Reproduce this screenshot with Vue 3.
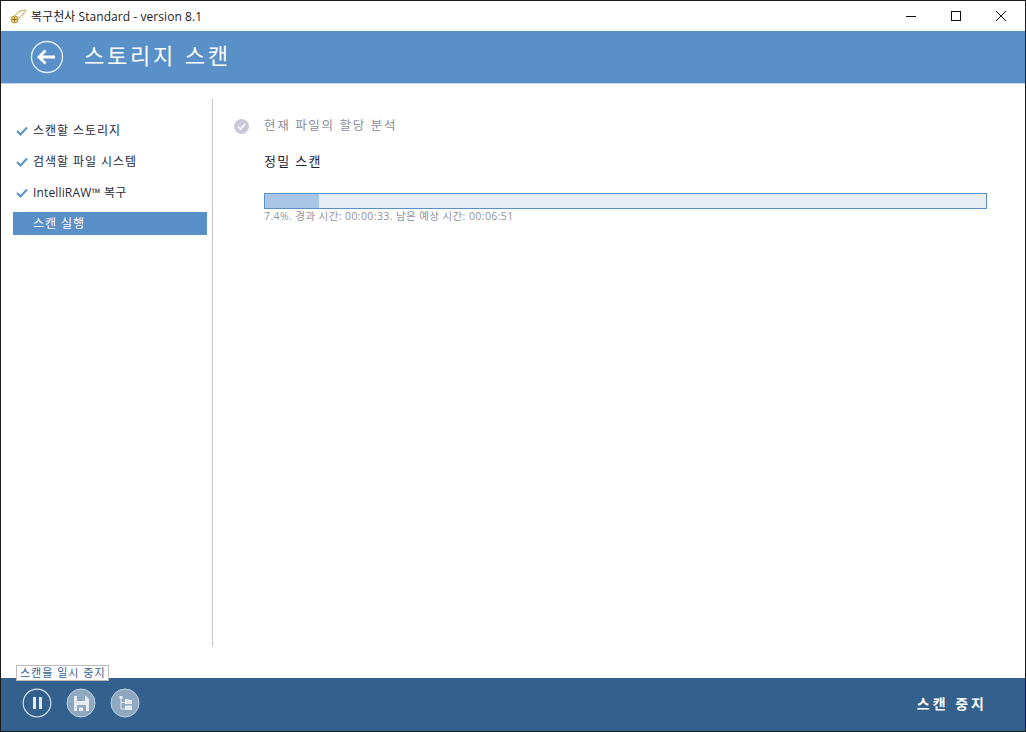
<template>
  <div class="window">
    <div class="titlebar">
      <svg class="logo" width="17" height="15" viewBox="0 0 17 15">
        <path d="M4 8C6 4 11 1 16 1C16 3 14 4 13 4.500C14 5 13 6 11.500 6.500C11 8 9 9 7 9" fill="#fffdf4" stroke="#c9a24d" stroke-width="1"/>
        <circle cx="4.500" cy="10.500" r="3.500" fill="#f6e08c" stroke="#b08a2c"/>
        <path d="M4.500 8V13M2 10.500H7" stroke="#8a6a18" stroke-width="1"/>
      </svg>
      <span class="app-title">복구천사 Standard - version 8.1</span>
      <div class="win-btns">
        <svg width="12" height="12" viewBox="0 0 12 12"><path d="M1 6.500H11" stroke="#111"/></svg>
        <svg width="12" height="12" viewBox="0 0 12 12"><rect x="1.500" y="1.500" width="9" height="9" fill="none" stroke="#111"/></svg>
        <svg width="12" height="12" viewBox="0 0 12 12"><path d="M1 1L11 11M11 1L1 11" stroke="#111"/></svg>
      </div>
    </div>

    <header class="header">
      <svg class="back" width="34" height="34" viewBox="0 0 34 34">
        <circle cx="17" cy="17" r="15.500" fill="none" stroke="#e8f0f8" stroke-width="1.300"/>
        <path d="M9 17H25M15.500 10.500L9 17L15.500 23.500" fill="none" stroke="#fff" stroke-width="2.800"/>
      </svg>
      <h1>스토리지 스캔</h1>
    </header>

    <main class="body">
      <nav class="steps">
        <div v-for="s in steps" :key="s.label" class="step" :class="{ active: s.active, latin: s.latin }">
          <svg v-if="!s.active" class="check" width="12" height="10" viewBox="0 0 12 10">
            <path d="M1 5L4.500 8.500L11 1.500" fill="none" stroke="#5a90c8" stroke-width="2"/>
          </svg>
          <span>{{ s.label }}</span>
        </div>
      </nav>

      <section class="content">
        <div class="stage-done">
          <svg width="15" height="15" viewBox="0 0 15 15">
            <circle cx="7.500" cy="7.500" r="7.500" fill="#c8c8d6"/>
            <path d="M4 7.500L6.500 10L11 5" fill="none" stroke="#fff" stroke-width="1.600"/>
          </svg>
          <span>현재 파일의 할당 분석</span>
        </div>
        <div class="stage-now">정밀 스캔</div>
        <div class="bar">
          <div class="bar-fill" :style="{ width: barWidth + '%' }"></div>
        </div>
        <div class="bar-text">7.4%. 경과 시간: 00:00:33. 남은 예상 시간: 00:06:51</div>
      </section>
    </main>

    <footer class="footer">
      <div class="tooltip">스캔을 일시 중지</div>
      <div class="tools">
        <button class="round">
          <svg width="30" height="30" viewBox="0 0 30 30">
            <circle cx="15" cy="15" r="13.800" fill="none" stroke="#d5dfe9" stroke-width="1.200"/>
            <rect x="11" y="9" width="3" height="12" fill="#e3eaf1"/>
            <rect x="17" y="9" width="3" height="12" fill="#e3eaf1"/>
          </svg>
        </button>
        <button class="round">
          <svg width="30" height="30" viewBox="0 0 30 30">
            <circle cx="15" cy="15" r="14" fill="#8fa8c1" stroke="#c3d0dd"/>
            <path d="M8 8H20L23 11V23H8Z" fill="#e6ecf2"/>
            <rect x="11" y="8" width="8" height="5" fill="#8fa8c1"/>
            <rect x="11" y="17" width="9" height="6" fill="#8fa8c1"/>
            <rect x="13" y="19.500" width="4" height="3.500" fill="#e6ecf2"/>
          </svg>
        </button>
        <button class="round">
          <svg width="30" height="30" viewBox="0 0 30 30">
            <circle cx="15" cy="15" r="14" fill="#8fa8c1" stroke="#c3d0dd"/>
            <path d="M11 10V21H15M11 14.500H15" fill="none" stroke="#e6ecf2"/>
            <rect x="9.500" y="8" width="3" height="3" fill="#e6ecf2"/>
            <path d="M15 11H18L19 12H22V16H15Z" fill="#e6ecf2"/>
            <path d="M15 17.500H22V22H15Z" fill="#e6ecf2"/>
          </svg>
        </button>
      </div>
      <span class="stop">스캔 중지</span>
    </footer>
  </div>
</template>

<script setup>
const barWidth = 7.5

const steps = [
  { label: '스캔할 스토리지' },
  { label: '검색할 파일 시스템' },
  { label: 'IntelliRAW™ 복구', latin: true },
  { label: '스캔 실행', active: true }
]
</script>

<style>
html, body { margin: 0; overflow: hidden; background: #fff; }
</style>

<style scoped>
.window {
  width: 1026px;
  height: 732px;
  box-sizing: border-box;
  border: 1px solid #1c1c1c;
  display: flex;
  flex-direction: column;
  background: #fff;
  font-family: "Open Sans", "Noto Sans CJK KR", sans-serif;
  font-size: 12px;
}
.titlebar { height: 30px; display: flex; align-items: center; padding-left: 9px; flex: none; }
.logo { margin-right: 4px; }
.app-title { font-size: 12px; color: #222; letter-spacing: 0.06px; }
.win-btns { margin-left: auto; display: flex; gap: 33px; padding-right: 18px; align-items: center; }

.header {
  height: 53px;
  flex: none;
  background: #5a90c8;
  display: flex;
  align-items: center;
  padding-left: 29px;
  border-bottom: 1px solid #c5d5e6;
  box-sizing: border-box;
}
.header h1 { margin: 0 0 6px 20px; font-size: 22px; font-weight: 400; color: #fff; letter-spacing: 2.800px; }

.body { flex: 1; display: flex; padding-top: 15px; min-height: 0; }
.steps {
  width: 194px;
  height: 528px;
  margin-left: 12px;
  border-right: 1px solid #c4c4c4;
  padding-top: 20px;
  padding-right: 5px;
  flex: none;
  display: flex;
  flex-direction: column;
  gap: 8px;
}
.step { height: 23px; display: flex; align-items: center; padding-left: 20px; position: relative; color: #2a2a3a; letter-spacing: 0.950px; }
.step span { margin-bottom: 2px; }
.step.latin { letter-spacing: 0.150px; }
.step.active { background: #5a90c8; color: #fff; }
.check { position: absolute; left: 3px; top: 7px; }

.content { flex: 1; padding: 16px 38px 0 21px; color: #333; }
.stage-done { display: flex; align-items: center; gap: 15px; color: #8d8d99; font-size: 12.500px; letter-spacing: 1.650px; height: 20px; }
.stage-done svg { margin-top: 3px; }
.stage-done span { margin-bottom: 1px; }
.stage-now { margin: 16px 0 0 30px; color: #23233a; font-size: 13px; letter-spacing: 1.300px; height: 20px; line-height: 20px; }
.bar { margin: 22px 0 0 30px; height: 14px; background: #e8edf4; border: 1px solid #5a90c8; }
.bar-fill { height: 100%; background: #a8c6e4; }
.bar-text { margin: -1px 0 0 30px; color: #92929e; font-size: 10.500px; letter-spacing: 0.400px; }

.footer {
  height: 53px;
  flex: none;
  background: #33608c;
  display: flex;
  align-items: center;
  justify-content: space-between;
  padding: 0 38px 3px 21px;
  box-sizing: border-box;
  position: relative;
}
.tools { display: flex; gap: 14px; align-items: center; }
.round { padding: 0; border: 0; background: none; display: flex; }
.stop { color: #fff; font-size: 14px; font-weight: 600; letter-spacing: 3px; }
.tooltip {
  position: absolute;
  left: 15px;
  top: -13px;
  height: 14px;
  line-height: 14px;
  padding: 0 2px 0 3px;
  background: #fff;
  border: 1px solid #bbb;
  color: #33608c;
  font-size: 11px;
  letter-spacing: 1px;
}
</style>
